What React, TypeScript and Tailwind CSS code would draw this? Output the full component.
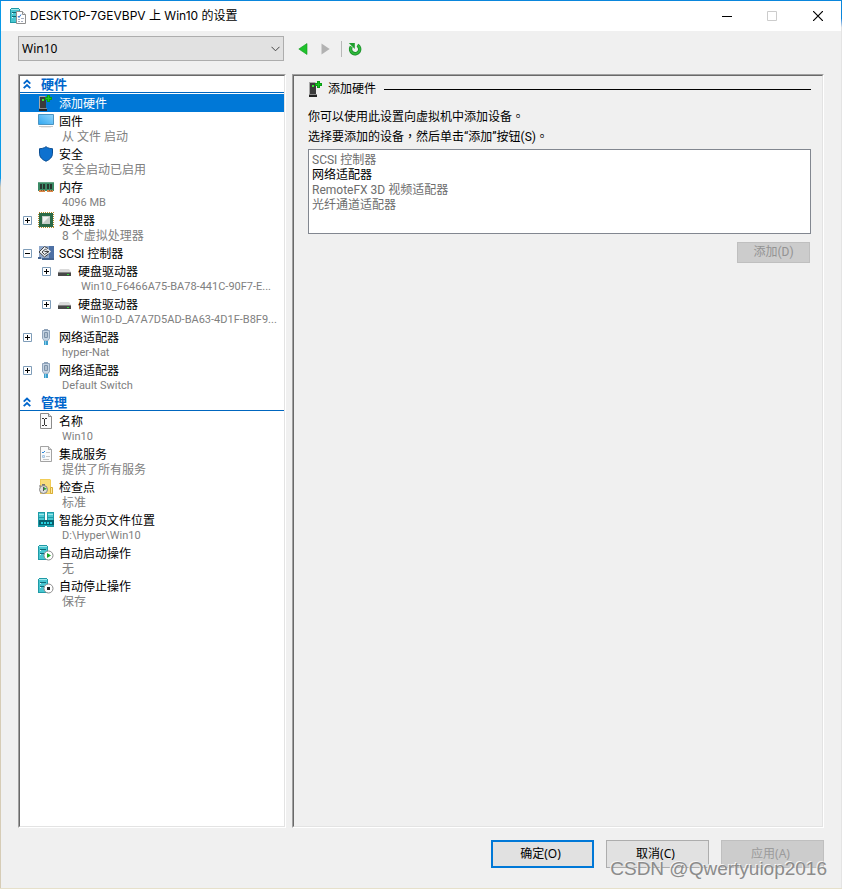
import React, { useState } from 'react';

type nodeType = {
  id: string;
  label: string;
  detail?: string;
  latin?: boolean;
  icon: React.ReactNode;
  open?: boolean;
  expandable?: boolean;
  children?: nodeType[];
};

function Icon({ children }: { children: React.ReactNode }) {
  return (
    <svg viewBox="0 0 16 16" className="size-4 shrink-0" aria-hidden="true">
      {children}
    </svg>
  );
}

function ServerShape() {
  return (
    <g shapeRendering="crispEdges">
      <path d="M1 0h8v1h1v14H0V1h1z" fill="#1f9aa6" />
      <path d="M1 1h8v13H1z" fill="#48c6d0" />
      <path d="M1 1h8v1H1z" fill="#9fe8ec" />
      <path d="M2 4h6v1H2zM2 8h6v1H2z" fill="#0f6a75" />
      <path d="M2 5h1v1H2zM2 9h1v1H2z" fill="#e8ffff" />
    </g>
  );
}

function TitleIcon() {
  return (
    <Icon>
      <ServerShape />
      <path d="M6.500 3.500h6l3 3v9h-9z" fill="#fff" stroke="#8f8f8f" />
      <path d="M12.500 3.500v3h3" fill="#eee" stroke="#8f8f8f" />
      <path d="M8 8l1 1.500 2-3" fill="none" stroke="#2470c8" />
      <path d="M8 11h2v1H8zM8 13h2v1H8zM11 10h3v1h-3zM11 13h2v1h-2z" fill="#a8afc0" />
    </Icon>
  );
}

function AddIcon() {
  return (
    <Icon>
      <path d="M1 1h6l1 1v12H1z" fill="#a9a9a9" />
      <path d="M2 2h6v11H2z" fill="#3b3b3b" />
      <path d="M1 14h8v2H1z" fill="#222" />
      <path d="M1 13h8v1H1z" fill="#888" />
      <path d="M4 4h2v2H4z" fill="#39ee35" />
      <path d="M9 0h3v2h2v3h-2v2H9V5H7V2h2z" fill="#0a9d14" />
      <path d="M10 1h1v2h2v1h-2v2h-1V4H8V3h2z" fill="#17c522" />
    </Icon>
  );
}

function FirmwareIcon() {
  return (
    <Icon>
      <defs>
        <linearGradient id="screen" x1="0" y1="1" x2="1" y2="0">
          <stop offset="0" stopColor="#2fa6f0" />
          <stop offset="1" stopColor="#92d6fc" />
        </linearGradient>
      </defs>
      <path d="M.500 1.500h15v10H.500z" fill="url(#screen)" stroke="#4a94c2" />
      <path d="M1 13.500h14" stroke="#c9c9c9" />
      <path d="M3 14.500h10" stroke="#eee" />
    </Icon>
  );
}

function ShieldIcon() {
  return (
    <Icon>
      <path d="M8 .700c2 1.500 4.500 2 6.500 2v4.500c0 4-2.800 6.500-6.500 8-3.700-1.500-6.500-4-6.500-8V2.700c2 0 4.500-.5 6.500-2z" fill="#0e71cf" stroke="#0b4d91" />
    </Icon>
  );
}

function MemoryIcon() {
  return (
    <Icon>
      <g shapeRendering="crispEdges">
        <path d="M0 3h16v9H0z" fill="#3b8a66" />
        <path d="M0 3h16v1H0z" fill="#68a888" />
        <path d="M2 5h2v5H2zM5 5h2v5H5zM9 5h2v5H9zM12 5h2v5h-2z" fill="#26352e" />
        <path d="M1 11h6v2H1zM9 11h6v2H9z" fill="#d98545" />
        <path d="M3 11h1v1H3zM5 11h1v1H5zM11 11h1v1h-1zM13 11h1v1h-1z" fill="#7a5a35" />
      </g>
    </Icon>
  );
}

function CpuIcon() {
  return (
    <Icon>
      <g shapeRendering="crispEdges">
        <path d="M.500.500h15v15H.500z" fill="none" stroke="#b5892c" strokeDasharray="1 1" />
        <path d="M1 1h14v14H1z" fill="#2b6a48" />
        <path d="M4 4h8v8H4z" fill="#c5cdc8" />
      </g>
      <path d="M5 5h6L5 11z" fill="#f2f4f2" />
    </Icon>
  );
}

function ScsiIcon() {
  return (
    <Icon>
      <path d="M1 1h15v13H1z" fill="#8fa8cb" />
      <path d="M11 1h5v13h-5z" fill="#4d70a4" />
      <path d="M0 12h3v2H0zM4 13h12v2H4z" fill="#46648f" />
      <path d="M6.500 1L13 6.500 6.500 12.500.500 7z" fill="#eceff3" />
      <path d="M10 3.500L6.500 1.500 1 7l5.500 5 4-3M4 7l3.500-3L9 5.500M4 7l2.500 2.500L11 6.500H6.500" fill="none" stroke="#444" />
    </Icon>
  );
}

function DiskIcon() {
  return (
    <Icon>
      <path d="M3 6h9l2 3H1z" fill="#dadada" />
      <path d="M1 9h13v4H1z" fill="#484848" />
      <path d="M1 9h13v1H1z" fill="#858585" />
      <path d="M10 11h2v1h-2z" fill="#35df3a" />
    </Icon>
  );
}

function NetworkIcon() {
  return (
    <Icon>
      <path d="M6 0h4v2H6z" fill="#8ea2b8" />
      <path d="M4.500 1.500h7v8l-2 2.500h-3l-2-2.500z" fill="#c5d3e2" stroke="#8fa3ba" />
      <path d="M6.500 3.500h3v5h-3z" fill="#e9f1f8" stroke="#7d92a9" />
      <path d="M8 4v4" stroke="#7d92a9" />
      <path d="M6 12h4v4H6z" fill="#3d9dcb" />
      <path d="M7 12h1v4H7z" fill="#82cdea" />
    </Icon>
  );
}

function NameIcon() {
  return (
    <Icon>
      <path d="M2.500.500h8l3 3v12h-11z" fill="#fafafa" stroke="#8b8b8b" />
      <path d="M10.500.500v3h3" fill="#ddd" stroke="#8b8b8b" />
      <path d="M4 5.500h2M7 5.500h2M6.500 6v6M4 12.500h2M7 12.500h2" fill="none" stroke="#333" />
    </Icon>
  );
}

function ServicesIcon() {
  return (
    <Icon>
      <path d="M2.500.500h8l3 3v12h-11z" fill="#fafafa" stroke="#a3a3a3" />
      <path d="M10.500.500v3h3" fill="#ddd" stroke="#a3a3a3" />
      <path d="M4 6l1 1 2-2" fill="none" stroke="#2e86d8" />
      <path d="M4.500 9.500h2v2h-2z" fill="#d4e7f8" stroke="#a9c7e2" />
      <path d="M8 6.500h4M8 10.500h4M5 13.500h6" stroke="#c4c4c4" />
    </Icon>
  );
}

function CheckpointIcon() {
  return (
    <Icon>
      <path d="M2 0h10l1 1v8h2v6H2z" fill="#f1cd58" />
      <path d="M3 1h9v13H3z" fill="#f8dd7c" />
      <path d="M12.500 8.500h2v6h-2z" fill="#ffeaa0" stroke="#d9af38" />
      <path d="M4 5h3v2H4z" fill="#777" />
      <path d="M1 7l1-1 1 1-1 1z" fill="#777" />
      <circle cx="5.500" cy="10.500" r="4" fill="#dedede" stroke="#858585" />
      <path d="M5 7.500l4 2.500-3 1z" fill="#23a42c" />
      <path d="M5.500 8v4" stroke="#555" />
    </Icon>
  );
}

function PagingIcon() {
  return (
    <Icon>
      <g shapeRendering="crispEdges">
        <path d="M0 0h7v15H0zM9 0h7v15H9z" fill="#1f9aa6" />
        <path d="M1 1h5v4H1zM10 1h5v4h-5zM1 6h5v2H1zM10 6h5v2h-5z" fill="#48c6d0" />
        <path d="M1 2h5v1H1zM10 2h5v1h-5z" fill="#9be7eb" />
        <path d="M1 8h15v5H1z" fill="#07616f" />
        <path d="M3 10h2v2H3zM6 10h2v2H6zM9 10h2v2H9zM12 10h2v2h-2z" fill="#27d0dd" />
        <path d="M2 13h12v1H2z" fill="#16a6b2" />
      </g>
    </Icon>
  );
}

function StartIcon() {
  return (
    <Icon>
      <ServerShape />
      <circle cx="10.500" cy="10.500" r="4.500" fill="#fff" stroke="#8a8a8a" />
      <path d="M9 8l4 2.500L9 13z" fill="#16a622" />
    </Icon>
  );
}

function StopIcon() {
  return (
    <Icon>
      <ServerShape />
      <circle cx="10.500" cy="10.500" r="4.500" fill="#fff" stroke="#8a8a8a" />
      <path d="M9 9h3v3H9z" fill="#222" />
    </Icon>
  );
}

const hardware: nodeType[] = [
  { id: 'add', label: '添加硬件', icon: <AddIcon /> },
  { id: 'firmware', label: '固件', detail: '从 文件 启动', icon: <FirmwareIcon /> },
  { id: 'security', label: '安全', detail: '安全启动已启用', icon: <ShieldIcon /> },
  { id: 'memory', label: '内存', detail: '4096 MB', latin: true, icon: <MemoryIcon /> },
  { id: 'cpu', label: '处理器', detail: '8 个虚拟处理器', icon: <CpuIcon />, expandable: true },
  {
    id: 'scsi', label: 'SCSI 控制器', icon: <ScsiIcon />, expandable: true, open: true,
    children: [
      { id: 'disk1', label: '硬盘驱动器', detail: 'Win10_F6466A75-BA78-441C-90F7-E...', latin: true, icon: <DiskIcon />, expandable: true },
      { id: 'disk2', label: '硬盘驱动器', detail: 'Win10-D_A7A7D5AD-BA63-4D1F-B8F9...', latin: true, icon: <DiskIcon />, expandable: true },
    ],
  },
  { id: 'net1', label: '网络适配器', detail: 'hyper-Nat', latin: true, icon: <NetworkIcon />, expandable: true },
  { id: 'net2', label: '网络适配器', detail: 'Default Switch', latin: true, icon: <NetworkIcon />, expandable: true },
];

const management: nodeType[] = [
  { id: 'name', label: '名称', detail: 'Win10', latin: true, icon: <NameIcon /> },
  { id: 'services', label: '集成服务', detail: '提供了所有服务', icon: <ServicesIcon /> },
  { id: 'checkpoint', label: '检查点', detail: '标准', icon: <CheckpointIcon /> },
  { id: 'paging', label: '智能分页文件位置', detail: 'D:\\Hyper\\Win10', latin: true, icon: <PagingIcon /> },
  { id: 'start', label: '自动启动操作', detail: '无', icon: <StartIcon /> },
  { id: 'stop', label: '自动停止操作', detail: '保存', icon: <StopIcon /> },
];

function TreeNode({ node, selected, onSelect }: { node: nodeType; selected: string; onSelect: (id: string) => void }) {
  const [open, setOpen] = useState<boolean>(!!node.open);
  const active = selected === node.id;
  return (
    <li>
      <div className={active ? 'flex items-start bg-[#0078d7] pl-[3px] text-white' : 'flex items-start pl-[3px]'}>
        <div className="flex h-[18px] w-[15px] shrink-0 items-center">
          {node.expandable && (
            <button type="button" aria-label={open ? '折叠' : '展开'} onClick={() => setOpen(!open)}>
              <svg viewBox="0 0 9 9" className="block size-[9px]">
                <path d="M.500.500h8v8h-8z" fill="#fff" stroke="#7f9db9" />
                <path d={open ? 'M2 4.500h5' : 'M2 4.500h5M4.500 2v5'} stroke="#000" />
              </svg>
            </button>
          )}
        </div>
        <button type="button" onClick={() => onSelect(node.id)} className="flex min-w-0 flex-1 gap-[5px] text-left">
          <span className="flex h-[18px] items-center">{node.icon}</span>
          <span className="block min-w-0 flex-1">
            <span className="block h-[18px] leading-5 whitespace-nowrap">{node.label}</span>
            {node.detail && (
              <span className={node.latin
                ? 'block h-[15px] pl-[3px] text-[11px] leading-[13px] whitespace-nowrap text-[#808080]'
                : 'block h-[15px] pl-[3px] leading-[14px] whitespace-nowrap text-[#808080]'}>
                {node.detail}
              </span>
            )}
          </span>
        </button>
      </div>
      {open && node.children && (
        <ul className="pl-[19px]">
          {node.children.map((child) => (
            <TreeNode key={child.id} node={child} selected={selected} onSelect={onSelect} />
          ))}
        </ul>
      )}
    </li>
  );
}

function Section({ title, nodes, selected, onSelect }: { title: string; nodes: nodeType[]; selected: string; onSelect: (id: string) => void }) {
  return (
    <section>
      <h2 className="mb-px flex h-[17px] items-center gap-[10px] border-b border-[#0066bf] pl-[3px] text-[13px] leading-[18px] font-bold text-[#0066cc]">
        <svg viewBox="0 0 8 10" className="h-[10px] w-2" fill="none" stroke="#0066cc" strokeWidth="1.800">
          <path d="M.700 4.700L4 1.500l3.300 3.200M.700 9.200L4 6l3.300 3.200" />
        </svg>
        <span className="pt-px">{title}</span>
      </h2>
      <ul>
        {nodes.map((node) => (
          <TreeNode key={node.id} node={node} selected={selected} onSelect={onSelect} />
        ))}
      </ul>
    </section>
  );
}

export default function App() {
  const [selected, setSelected] = useState<string>('add');
  return (
    <div className="flex min-h-screen flex-col border-t border-b border-t-[#0a86dc] border-b-[#e6e0ca] bg-[#f0f0f0] font-['Roboto','Noto_Sans_CJK_SC',sans-serif] text-xs text-black">
      <div className="flex flex-1">
        <div className="w-px shrink-0 bg-linear-to-b from-[#0a9ae8] from-20% to-[#d6ccb6] to-21%" />
        <main className="flex min-w-0 flex-1 flex-col">
          <header className="flex h-[30px] items-center bg-white pl-[9px]">
            <TitleIcon />
            <h1 className="pl-1 font-['Inter','Noto_Sans_CJK_SC',sans-serif] leading-5">DESKTOP-7GEVBPV 上 Win10 的设置</h1>
            <div className="ml-auto flex h-full">
              <button type="button" aria-label="最小化" className="flex w-[45px] items-center justify-center">
                <svg viewBox="0 0 10 10" className="size-[10px]" stroke="#000"><path d="M0 5.500h10" /></svg>
              </button>
              <button type="button" aria-label="最大化" disabled className="flex w-[45px] items-center justify-center">
                <svg viewBox="0 0 10 10" className="size-[10px]" fill="none" stroke="#ccc"><path d="M.500.500h9v9h-9z" /></svg>
              </button>
              <button type="button" aria-label="关闭" className="flex w-[47px] items-center justify-center">
                <svg viewBox="0 0 10 10" className="size-[10px]" stroke="#000" strokeWidth="1.200"><path d="M0 0l10 10M10 0L0 10" /></svg>
              </button>
            </div>
          </header>

          <div className="flex items-center pt-[5px] pb-[13px] pl-[17px]">
            <div className="relative w-[266px]">
              <select aria-label="虚拟机" className="block h-[25px] w-full appearance-none border border-[#adadad] bg-[#e1e1e1] pl-[3px] font-['Noto_Sans','Noto_Sans_CJK_SC',sans-serif] text-xs">
                <option>Win10</option>
              </select>
              <svg viewBox="0 0 9 6" className="pointer-events-none absolute top-[10px] right-1 h-[6px] w-[9px]" fill="none" stroke="#444">
                <path d="M.500.800l4 4 4-4" />
              </svg>
            </div>
            <button type="button" aria-label="后退" className="ml-[14px]">
              <svg viewBox="0 0 10 12" className="block h-3 w-[10px]"><path d="M9 .500v11L.800 6z" fill="#1fc22c" stroke="#109a1c" strokeWidth=".600" /></svg>
            </button>
            <button type="button" aria-label="前进" disabled className="ml-3">
              <svg viewBox="0 0 10 12" className="block h-3 w-[10px]"><path d="M1.500.500v11L9.700 6z" fill="#b2b2b2" /></svg>
            </button>
            <span className="ml-[11px] h-4 w-px bg-[#b8b8b8]" />
            <button type="button" aria-label="刷新" className="ml-[6px]">
              <svg viewBox="0 0 14 14" className="block size-[14px]">
                <path d="M9.500 3.200A4.600 4.600 0 1 1 3.300 4.600" fill="none" stroke="#168a26" strokeWidth="3.400" />
                <path d="M9.500 3.200A4.600 4.600 0 1 1 3.300 4.600" fill="none" stroke="#2fb83c" strokeWidth="2" />
                <path d="M.800 1h6v6z" fill="#1e9e2c" />
              </svg>
            </button>
          </div>

          <div className="flex flex-1 gap-[6px] pr-[17px] pl-[17px]">
            <nav className="w-[268px] shrink-0 border border-t-[#a0a0a0] border-r-white border-b-white border-l-[#a0a0a0]">
              <div className="h-full overflow-hidden border border-t-[#696969] border-r-[#e3e3e3] border-b-[#e3e3e3] border-l-[#696969] bg-white">
                <Section title="硬件" nodes={hardware} selected={selected} onSelect={setSelected} />
                <Section title="管理" nodes={management} selected={selected} onSelect={setSelected} />
              </div>
            </nav>

            <section className="min-w-0 flex-1 border border-t-[#a0a0a0] border-r-white border-b-white border-l-[#a0a0a0]">
              <div className="h-full border border-t-[#696969] border-r-[#e3e3e3] border-b-[#e3e3e3] border-l-[#696969] pt-1 pr-[11px] pl-[14px]">
                <div className="flex h-[18px] items-center">
                  <AddIcon />
                  <h2 className="pl-1 leading-[18px]">添加硬件</h2>
                  <span className="ml-2 h-px flex-1 bg-black" />
                </div>
                <div className="pt-[9px] font-['Roboto','Noto_Sans_CJK_TC',sans-serif]">
                  <p className="leading-5">你可以使用此设置向虚拟机中添加设备。</p>
                  <label htmlFor="devices" className="block leading-5">选择要添加的设备，然后单击“添加”按钮(S)。</label>
                </div>
                <select id="devices" size={5} className="mt-[2px] block h-[85px] w-full overflow-hidden border border-[#828790] bg-white pl-px text-xs">
                  <option disabled className="h-[15px] p-0 px-[2px] leading-[15px] text-[#6d6d6d]">SCSI 控制器</option>
                  <option className="h-[15px] p-0 px-[2px] leading-[15px]">网络适配器</option>
                  <option disabled className="h-[15px] p-0 px-[2px] leading-[15px] text-[#6d6d6d]">RemoteFX 3D 视频适配器</option>
                  <option disabled className="h-[15px] p-0 px-[2px] leading-[15px] text-[#6d6d6d]">光纤通道适配器</option>
                </select>
                <div className="flex justify-end pt-2 pr-px">
                  <button type="button" disabled className="h-[21px] w-[73px] border border-[#bfbfbf] bg-[#ccc] leading-[19px] text-[#939393]">添加(D)</button>
                </div>
              </div>
            </section>
          </div>

          <footer className="relative flex justify-end gap-3 pt-3 pr-[17px] pb-5 font-['Noto_Sans','Noto_Sans_CJK_SC',sans-serif]">
            <button type="button" className="h-7 w-[103px] border-2 border-[#0078d7] bg-[#e1e1e1] pr-1">确定(O)</button>
            <button type="button" className="h-7 w-[103px] border border-[#adadad] bg-[#e1e1e1] pr-1">取消(C)</button>
            <button type="button" disabled className="h-7 w-[103px] border border-[#bfbfbf] bg-[#ccc] pr-1 text-[#9b9b9b]">应用(A)</button>
            <span className="pointer-events-none absolute right-[14px] bottom-[7px] font-['Liberation_Sans',sans-serif] text-[19px] leading-6 text-[#8b8b8b] [text-shadow:-1px_-1px_0_#f4f4f4]">
              CSDN @Qwertyuiop2016
            </span>
          </footer>
        </main>
        <div className="w-px shrink-0 bg-linear-to-b from-[#0a86dc] from-2% to-[#e4e4e4] to-3%" />
      </div>
    </div>
  );
}
